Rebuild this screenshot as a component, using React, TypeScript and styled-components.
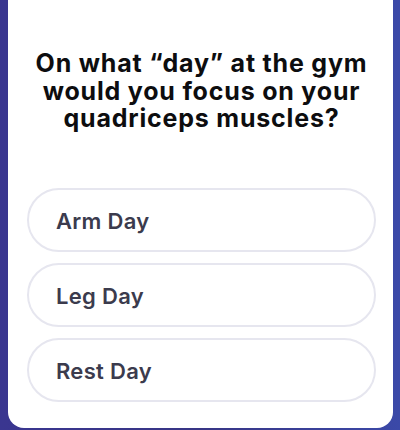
import React from "react";
import styled, { createGlobalStyle } from "styled-components";

const Global = createGlobalStyle`
  html, body { margin: 0; padding: 0; }
  body {
    width: 400px;
    height: 430px;
    overflow: hidden;
  }
`;

const Stage = styled.div`
  width: 400px;
  height: 430px;
  display: flex;
  padding-left: 8px;
  box-sizing: border-box;
  background: linear-gradient(90deg, #3a3690 0%, #383585 50%, #3b49a8 100%);
`;

const Card = styled.div`
  width: 385px;
  height: 428px;
  box-sizing: border-box;
  background: #ffffff;
  border-radius: 0 0 16px 16px;
  padding: 50px 17px 0 19px;
  display: flex;
  flex-direction: column;
  align-items: center;
`;

const Question = styled.h1`
  margin: 0 0 55px;
  font-family: "Inter", "Open Sans", sans-serif;
  font-weight: 700;
  font-size: 25px;
  line-height: 27.5px;
  color: #0d0d0f;
  text-align: center;
  letter-spacing: 0.8px;
  white-space: nowrap;
`;

const Options = styled.div`
  width: 100%;
  display: flex;
  flex-direction: column;
  gap: 11px;
`;

const Option = styled.button`
  height: 64px;
  width: 100%;
  box-sizing: border-box;
  border: 2px solid #e6e6ef;
  border-radius: 32px;
  background: #ffffff;
  padding: 3px 0 0 27px;
  text-align: left;
  font-family: "Inter", "Open Sans", sans-serif;
  font-weight: 600;
  font-size: 22px;
  letter-spacing: 0.3px;
  color: #3b3b4d;
  cursor: pointer;
`;

const options = ["Arm Day", "Leg Day", "Rest Day"];

export default function App() {
  return (
    <>
      <Global />
      <Stage>
        <Card>
          <Question>
            On what “day” at the gym
            <br />
            would you focus on your
            <br />
            quadriceps muscles?
          </Question>
          <Options>
            {options.map((o) => (
              <Option key={o}>{o}</Option>
            ))}
          </Options>
        </Card>
      </Stage>
    </>
  );
}
